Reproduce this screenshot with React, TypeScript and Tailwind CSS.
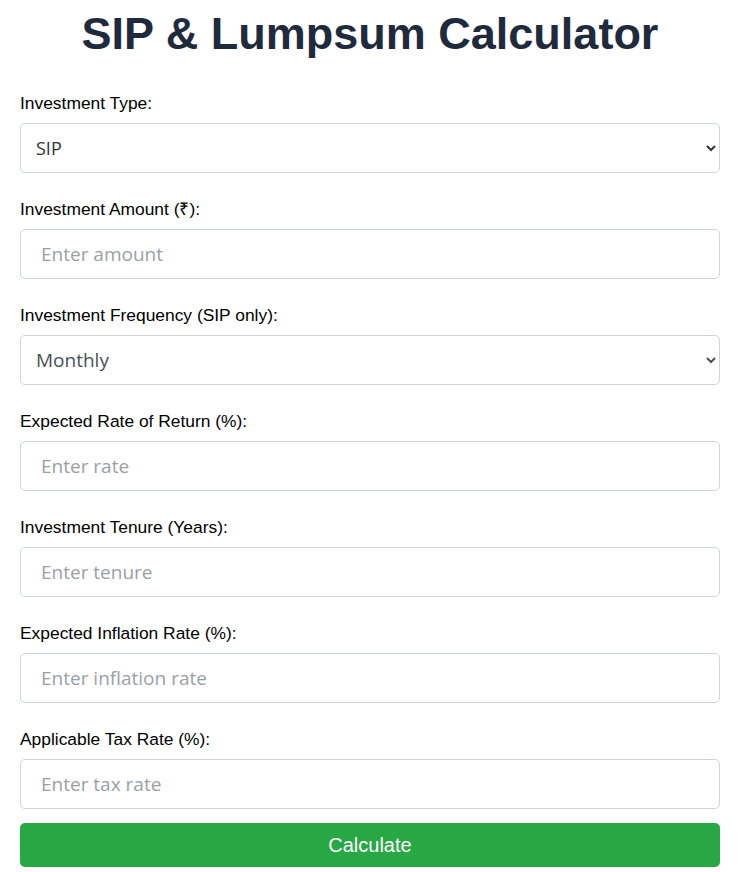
import React from "react";

const labelCls = "block text-[17.4px] leading-[19px] text-black mb-[10px]";
const boxCls =
  "block w-full h-[50px] rounded-[5px] border border-[#ced4da] bg-white outline-none";
const inputCls =
  boxCls +
  " px-5 text-[19px] text-[#495057] placeholder:text-[#9a9fa6] [font-family:'Open_Sans',sans-serif]";

function Field({ label, placeholder }: { label: string; placeholder: string }) {
  return (
    <div className="mb-[27px]">
      <label className={labelCls}>{label}</label>
      <input type="number" placeholder={placeholder} className={inputCls} />
    </div>
  );
}

export default function App() {
  return (
    <div className="min-h-screen bg-white pl-5 pr-[21px] [font-family:'Liberation_Sans',Arial,sans-serif]">
      <h1 className="pt-[6px] pb-[32px] text-center text-[45px] font-bold leading-[56px] text-[#1f2a3c]">
        SIP &amp; Lumpsum Calculator
      </h1>

      <div className="mb-[27px]">
        <label className={labelCls}>Investment Type:</label>
        <select
          defaultValue="SIP"
          className={boxCls + " pl-[11px] pr-[8px] text-[18px] text-[#333] [font-family:'Open_Sans',sans-serif]"}
        >
          <option value="SIP">SIP</option>
          <option value="Lumpsum">Lumpsum</option>
        </select>
      </div>

      <Field label="Investment Amount (₹):" placeholder="Enter amount" />

      <div className="mb-[27px]">
        <label className={labelCls}>Investment Frequency (SIP only):</label>
        <select
          defaultValue="Monthly"
          className={boxCls + " pl-[11px] pr-[8px] text-[19px] text-[#495057] [font-family:'Open_Sans',sans-serif]"}
        >
          <option value="Monthly">Monthly</option>
          <option value="Quarterly">Quarterly</option>
          <option value="Yearly">Yearly</option>
        </select>
      </div>

      <Field label="Expected Rate of Return (%):" placeholder="Enter rate" />
      <Field label="Investment Tenure (Years):" placeholder="Enter tenure" />
      <Field label="Expected Inflation Rate (%):" placeholder="Enter inflation rate" />

      <div className="mb-[14px]">
        <label className={labelCls}>Applicable Tax Rate (%):</label>
        <input type="number" placeholder="Enter tax rate" className={inputCls} />
      </div>

      <button className="block h-[44px] w-full rounded-[5px] bg-[#28a745] text-center text-[20px] text-white">
        Calculate
      </button>
    </div>
  );
}
